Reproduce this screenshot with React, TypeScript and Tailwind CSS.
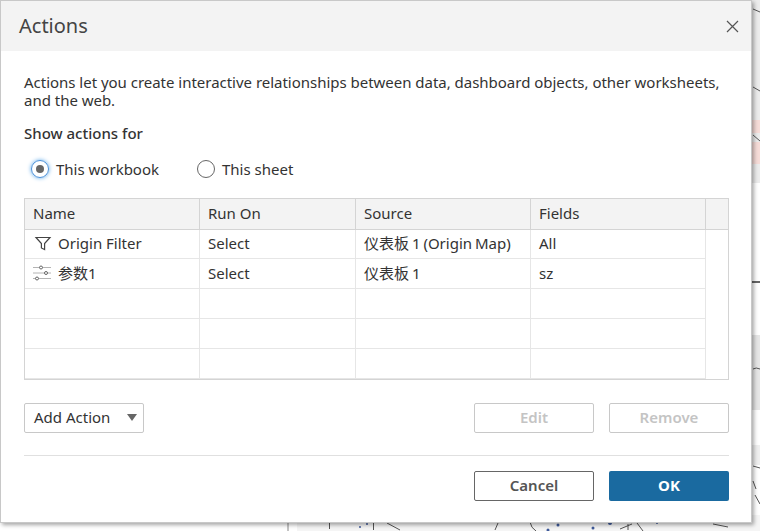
import React from "react";

const font = { fontFamily: '"Noto Sans", "Noto Sans CJK SC", sans-serif' };

function FilterIcon() {
  return (
    <svg width="16" height="15" viewBox="-1 0 16 15" fill="none" stroke="#444" strokeWidth="1.2" className="overflow-visible">
      <path d="M1 1.5h14L9.6 7.6v6L6.4 12V7.6z" />
    </svg>
  );
}

function ParamIcon() {
  return (
    <svg width="18" height="16" viewBox="0 0 18 16" fill="none">
      <path d="M0 2.5h18M0 8h18M0 13.5h18" stroke="#b4b4b4" strokeWidth="1" />
      <circle cx="8" cy="2.5" r="1.5" fill="#fff" stroke="#666" />
      <circle cx="13" cy="8" r="1.5" fill="#fff" stroke="#666" />
      <circle cx="4" cy="13.5" r="1.5" fill="#fff" stroke="#666" />
    </svg>
  );
}

function MapBackdrop() {
  return (
    <svg className="absolute inset-0" width="760" height="531" viewBox="0 0 760 531" fill="none">
      <rect x="297" y="515" width="463" height="16" fill="#f5f5f5" />
      <rect x="750" y="0" width="10" height="183" fill="#ececec" />
      <rect x="750" y="120" width="10" height="13" fill="#f6dcd8" />
      <rect x="750" y="142" width="10" height="22" fill="#f6dcd8" />
      <rect x="750" y="335" width="10" height="75" fill="#e6e6e6" />
      <rect x="750" y="445" width="10" height="20" fill="#efefef" />
      <g stroke="#555" strokeWidth="1">
        <path d="M288 515v16" stroke="#888" />
        <path d="M329.500 515v14M373.500 515v15M387 523l13 7M495 530l3-7M530 522q1 6 6 9M620 529l12-5M628 524v6M637 523l6 8M713 524l15 3M753 9l7 3M753 87l7 4M753 135l7 6M753 369q3-2 7 0M753 466l7 2M753 481l3 8M755 495l5 9" />
        <path d="M750 282h10" stroke="#666" strokeWidth="2" />
      </g>
      <g fill="#3f5a9a">
        <circle cx="360" cy="527" r="1" />
        <circle cx="367" cy="524" r="1" />
        <circle cx="548" cy="530" r="1.500" />
        <circle cx="558" cy="525" r="1.500" />
        <circle cx="593" cy="528" r="1.500" />
        <circle cx="610" cy="523" r="2" />
        <circle cx="657" cy="523" r="1" />
      </g>
    </svg>
  );
}

const rows: { icon?: React.ReactNode; name: string; runOn: string; source: string; fields: string; h: string; pb: string }[] = [
  { icon: <FilterIcon />, name: "Origin Filter", runOn: "Select", source: "仪表板 1 (Origin Map)", fields: "All", h: "h-[29px]", pb: "pb-[1px]" },
  { icon: <ParamIcon />, name: "参数1", runOn: "Select", source: "仪表板 1", fields: "sz", h: "h-[30px]", pb: "pb-[1px]" },
  { name: "", runOn: "", source: "", fields: "", h: "h-[30px]", pb: "" },
  { name: "", runOn: "", source: "", fields: "", h: "h-[30px]", pb: "" },
  { name: "", runOn: "", source: "", fields: "", h: "h-[30px]", pb: "" },
];

export default function App() {
  return (
    <div className="relative w-[760px] h-[531px] overflow-hidden bg-white" style={font}>
      <MapBackdrop />
      <div className="relative w-[752px] h-[523px] bg-white border border-[#c8c8c8] shadow-[2px_2px_4px_rgba(0,0,0,0.35)] flex flex-col text-[15px] text-[#333]">
        <div className="h-[50px] bg-[#f3f3f3] flex items-center justify-between pl-[18px] pr-[12px] shrink-0">
          <span className="text-[20px] text-[#444]">Actions</span>
          <svg width="13" height="13" viewBox="0 0 13 13" stroke="#555" strokeWidth="1.2"><path d="M1 1l11 11M12 1L1 12" /></svg>
        </div>
        <div className="px-[23px] flex-1 flex flex-col">
          <p className="mt-[22px] leading-[18px] w-[705px] tracking-[-0.02px]">Actions let you create interactive relationships between data, dashboard objects, other worksheets, and the web.</p>
          <div className="mt-[14px] leading-[20px] font-medium">Show actions for</div>
          <div className="mt-[16px] flex items-center pl-[7px] h-[20px]">
            <span className="w-[18px] h-[18px] rounded-full border border-[#4a90d9] shadow-[0_0_4px_#5aa7e8] flex items-center justify-center">
              <span className="w-[8px] h-[8px] rounded-full bg-[#666]" />
            </span>
            <span className="ml-[7px] w-[141px]">This workbook</span>
            <span className="w-[18px] h-[18px] rounded-full border border-[#666]" />
            <span className="ml-[7px]">This sheet</span>
          </div>
          <div className="mt-[19px] border border-[#d4d4d4] w-[705px] h-[182px]">
            <div className="flex h-[31px] bg-[#f3f3f3] border-b border-[#d4d4d4]">
              {["Name", "Run On", "Source", "Fields"].map((h, i) => (
                <div key={h} className={`${["w-[175px]", "w-[156px]", "w-[175px]", "w-[175px]"][i]} border-r border-[#d4d4d4] flex items-center pl-[8px] pb-[2px]`}>{h}</div>
              ))}
            </div>
            {rows.map((r, i) => (
              <div key={i} className={`flex ${r.h} w-[681px] border-b border-[#e6e6e6]`}>
                <div className={`w-[175px] border-r border-[#e6e6e6] flex items-center ${r.pb}`}>
                  {r.icon && <span className="w-[33px] flex justify-center pl-[1px]">{r.icon}</span>}
                  {r.name}
                </div>
                <div className={`w-[156px] border-r border-[#e6e6e6] flex items-center pl-[8px] ${r.pb}`}>{r.runOn}</div>
                <div className={`w-[175px] border-r border-[#e6e6e6] flex items-center pl-[8px] [word-spacing:-1px] ${r.pb}`}>{r.source}</div>
                <div className={`w-[175px] border-r border-[#e6e6e6] flex items-center pl-[8px] ${r.pb}`}>{r.fields}</div>
              </div>
            ))}
          </div>
          <div className="mt-[23px] flex items-center w-[705px]">
            <div className="w-[120px] h-[30px] border border-[#c8c8c8] rounded-[2px] flex items-center justify-between pl-[9px] pr-[6px] pb-[2px]">
              <span>Add Action</span>
              <svg width="10" height="7" viewBox="0 0 10 7"><path d="M0 0h10L5 7z" fill="#666" /></svg>
            </div>
            <div className="ml-auto w-[120px] h-[30px] border border-[#c8c8c8] rounded-[2px] flex items-center justify-center text-[#c4c4c4] font-semibold pb-[2px]">Edit</div>
            <div className="ml-[15px] w-[120px] h-[30px] border border-[#c8c8c8] rounded-[2px] flex items-center justify-center text-[#c4c4c4] font-semibold pb-[2px]">Remove</div>
          </div>
          <div className="mt-[22px] w-[705px] border-t border-[#e0e0e0]" />
          <div className="mt-[15px] flex w-[705px] justify-end">
            <div className="w-[120px] h-[30px] border border-[#666] rounded-[2px] flex items-center justify-center text-[#555] font-semibold pb-[2px]">Cancel</div>
            <div className="ml-[15px] w-[120px] h-[30px] bg-[#1a6aa0] rounded-[2px] flex items-center justify-center text-white font-bold pb-[2px]">OK</div>
          </div>
        </div>
      </div>
    </div>
  );
}
